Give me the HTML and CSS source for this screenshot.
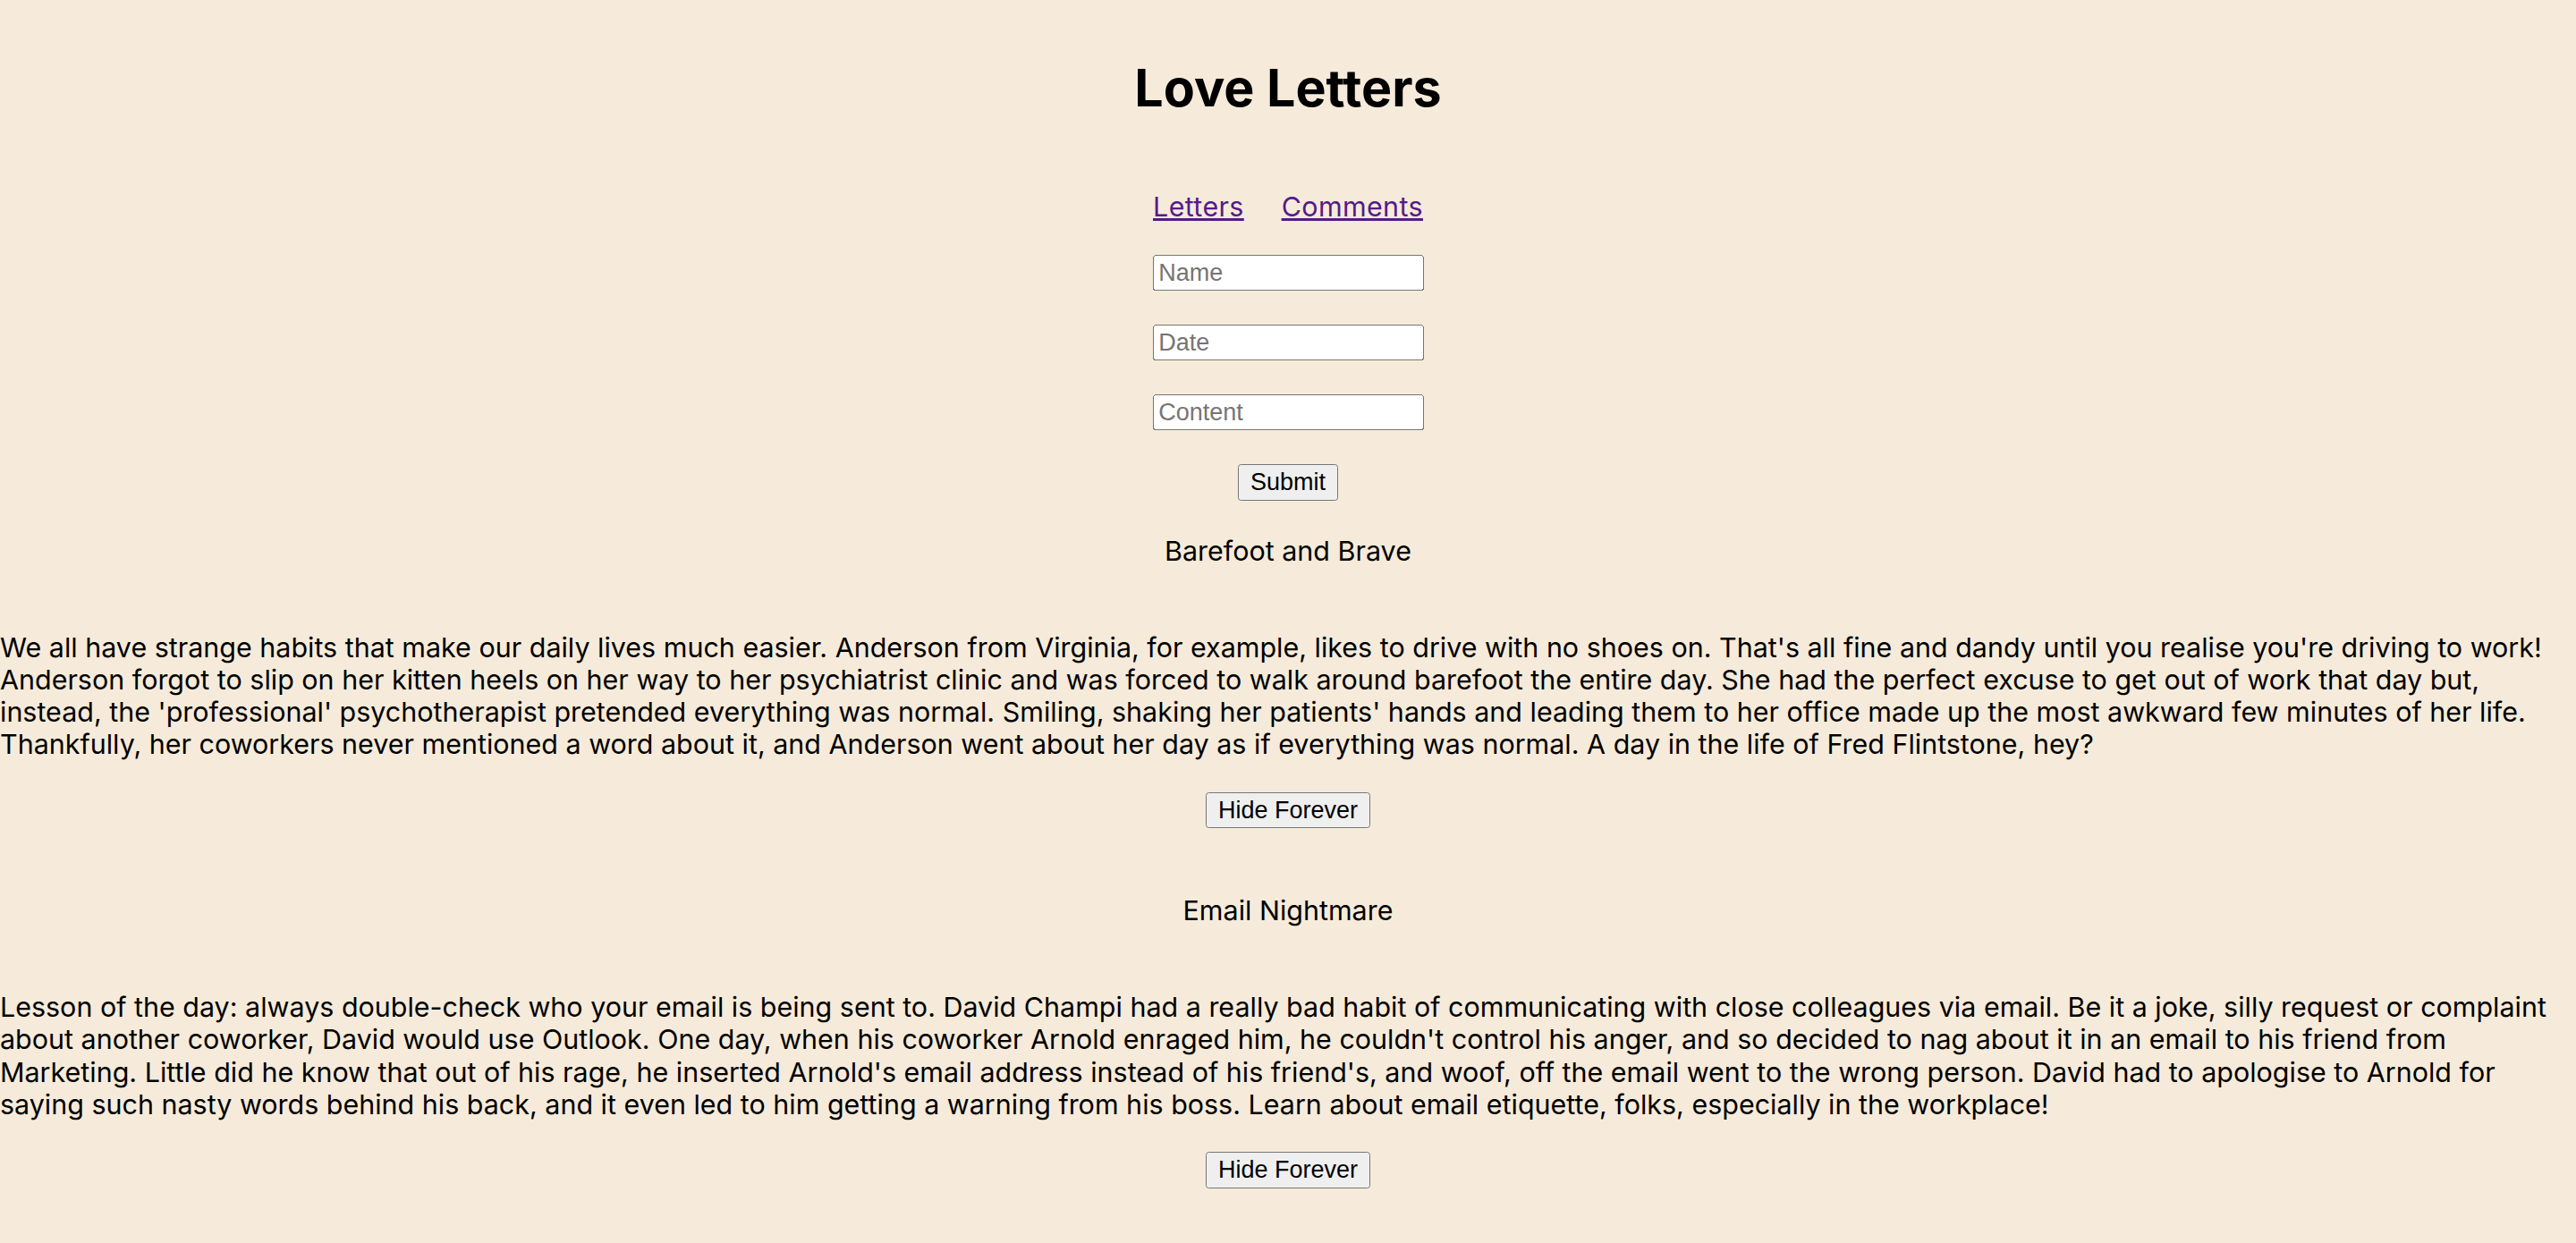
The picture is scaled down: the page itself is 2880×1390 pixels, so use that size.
FILE: index.html
```html
<!DOCTYPE html>
<html lang="en">
<head>
<meta charset="utf-8">
<title>Love Letters</title>
<link rel="stylesheet" href="styles.css">
</head>
<body>
<div class="page">
  <h1 class="title">Love Letters</h1>
  <nav class="nav">
    <a class="nav-link" href="#letters">Letters</a>
    <a class="nav-link" href="#comments">Comments</a>
  </nav>
  <form class="form">
    <input class="field" type="text" placeholder="Name">
    <input class="field" type="text" placeholder="Date">
    <input class="field" type="text" placeholder="Content">
    <button class="btn" type="button">Submit</button>
  </form>
  <div class="letters">
    <div class="letter">
      <div class="letter-title">Barefoot and Brave</div>
      <p class="letter-body">We all have strange habits that make our daily lives much easier. Anderson from Virginia, for example, likes to drive with no shoes on. That's all fine and dandy until you realise you're driving to work! Anderson forgot to slip on her kitten heels on her way to her psychiatrist clinic and was forced to walk around barefoot the entire day. She had the perfect excuse to get out of work that day but, instead, the 'professional' psychotherapist pretended everything was normal. Smiling, shaking her patients' hands and leading them to her office made up the most awkward few minutes of her life. Thankfully, her coworkers never mentioned a word about it, and Anderson went about her day as if everything was normal. A day in the life of Fred Flintstone, hey?</p>
      <button class="btn" type="button">Hide Forever</button>
    </div>
    <div class="letter">
      <div class="letter-title">Email Nightmare</div>
      <p class="letter-body">Lesson of the day: always double-check who your email is being sent to. David Champi had a really bad habit of communicating with close colleagues via email. Be it a joke, silly request or complaint about another coworker, David would use Outlook. One day, when his coworker Arnold enraged him, he couldn't control his anger, and so decided to nag about it in an email to his friend from Marketing. Little did he know that out of his rage, he inserted Arnold's email address instead of his friend's, and woof, off the email went to the wrong person. David had to apologise to Arnold for saying such nasty words behind his back, and it even led to him getting a warning from his boss. Learn about email etiquette, folks, especially in the workplace!</p>
      <button class="btn" type="button">Hide Forever</button>
    </div>
  </div>
</div>
</body>
</html>
```
FILE: styles.css
```css
html {
  zoom: 1.875;
  background: #f6ebda;
}
body {
  margin: 0;
  background: #f6ebda;
  font-family: Inter, "Noto Sans", sans-serif;
  font-size: 16.25px;
  line-height: 19.3px;
  color: #000;
}
.page {
  display: flex;
  flex-direction: column;
}
.title {
  margin: 34.2px 0 0;
  text-align: center;
  font-size: 30.6px;
  font-weight: 700;
  line-height: 37px;
}
.nav {
  margin-top: 42.4px;
  display: flex;
  justify-content: center;
  gap: 22.3px;
}
.nav-link {
  color: #551a8b;
  text-decoration: underline;
  letter-spacing: 0.2px;
}
.form {
  margin: 19.2px 0 0;
  display: flex;
  flex-direction: column;
  align-items: center;
  gap: 20.2px;
}
.field {
  box-sizing: border-box;
  width: 161.6px;
  height: 21.4px;
  font-family: "Liberation Sans", Arial, sans-serif;
  font-size: 14.4px;
}
.btn {
  box-sizing: border-box;
  height: 21.8px;
  padding: 0 6px;
  font-family: "Liberation Sans", Arial, sans-serif;
  font-size: 14.4px;
}
.letters {
  margin-top: 20.2px;
  display: flex;
  flex-direction: column;
  gap: 39.4px;
}
.letter {
  display: flex;
  flex-direction: column;
  align-items: center;
}
.letter-title {
  text-align: center;
  margin-bottom: 38.2px;
}
.letter-body {
  margin: 0 0 18.7px;
  align-self: stretch;
}
```
